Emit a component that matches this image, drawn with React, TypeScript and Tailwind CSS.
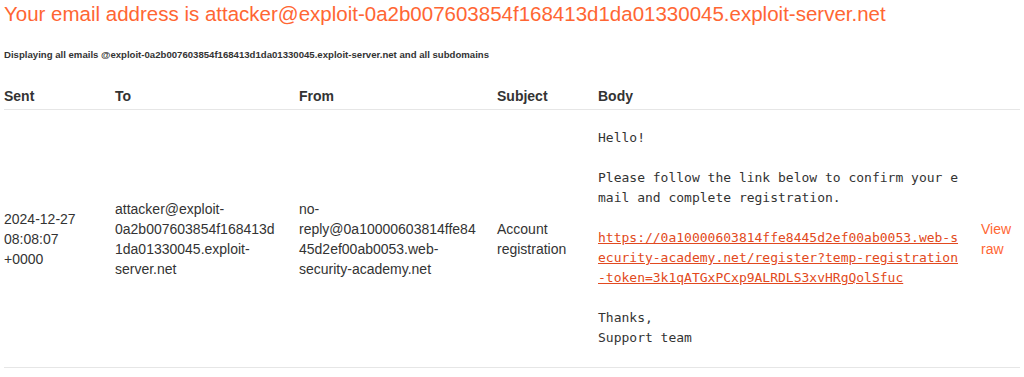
import React from 'react';

// Exploit server email client inbox
const bodyLines = {
  greeting: 'Hello!',
  intro: 'Please follow the link below to confirm your email and complete registration.',
  link: 'https://0a10000603814ffe8445d2ef00ab0053.web-security-academy.net/register?temp-registration-token=3k1qATGxPCxp9ALRDLS3xvHRgQolSfuc',
};

const App: React.FC = () => {
  return (
    <div className="min-h-screen bg-white px-[4px] font-['Liberation_Sans',Arial,sans-serif] text-[#333333]">
      <h1 className="pt-[2px] text-[20.5px] font-normal leading-[24px] text-[#ff6633]">
        Your email address is attacker@exploit-0a2b007603854f168413d1da01330045.exploit-server.net
      </h1>
      <p className="mt-[23px] text-[9.6px] font-bold leading-[12px] text-[#333333]">
        Displaying all emails @exploit-0a2b007603854f168413d1da01330045.exploit-server.net and all subdomains
      </p>

      <table className="mt-[16px] w-full table-fixed border-collapse text-left text-[14px] leading-[20px]">
        <colgroup>
          <col className="w-[111px]" />
          <col className="w-[184px]" />
          <col className="w-[198px]" />
          <col className="w-[101px]" />
          <col className="w-[383px]" />
          <col />
        </colgroup>
        <thead>
          <tr className="border-b border-[#e6e6e6]">
            <th className="pt-[9px] pr-5 pb-[3px] font-bold">Sent</th>
            <th className="pt-[9px] pr-5 pb-[3px] font-bold">To</th>
            <th className="pt-[9px] pr-5 pb-[3px] font-bold">From</th>
            <th className="pt-[9px] pr-5 pb-[3px] font-bold">Subject</th>
            <th className="pt-[9px] pr-5 pb-[3px] font-bold">Body</th>
            <th className="pt-[9px] pb-[3px]"></th>
          </tr>
        </thead>
        <tbody>
          <tr className="border-b border-[#e6e6e6]">
            <td className="pr-5 align-middle">
              2024-12-27
              <br />
              08:08:07
              <br />
              +0000
            </td>
            <td className="pr-5 align-middle [overflow-wrap:break-word]">
              attacker@exploit-0a2b007603854f168413d1da01330045.exploit-server.net
            </td>
            <td className="pr-5 align-middle [overflow-wrap:break-word]">
              no-reply@0a10000603814ffe8445d2ef00ab0053.web-security-academy.net
            </td>
            <td className="pr-5 align-middle">Account registration</td>
            <td className="pt-[18px] pr-5 pb-[19px] align-middle">
              <pre className="m-0 whitespace-pre-wrap break-all font-['DejaVu_Sans_Mono',monospace] text-[13px] leading-[20px] text-[#333333]">
                {bodyLines.greeting}
                {'\n\n'}
                {bodyLines.intro}
                {'\n\n'}
                <a href="#" className="text-[#e24920] underline">
                  {bodyLines.link}
                </a>
                {'\n\nThanks,\nSupport team'}
              </pre>
            </td>
            <td className="align-middle">
              <a href="#" className="text-[#ff6633]">
                View raw
              </a>
            </td>
          </tr>
        </tbody>
      </table>
    </div>
  );
};

export default App;
